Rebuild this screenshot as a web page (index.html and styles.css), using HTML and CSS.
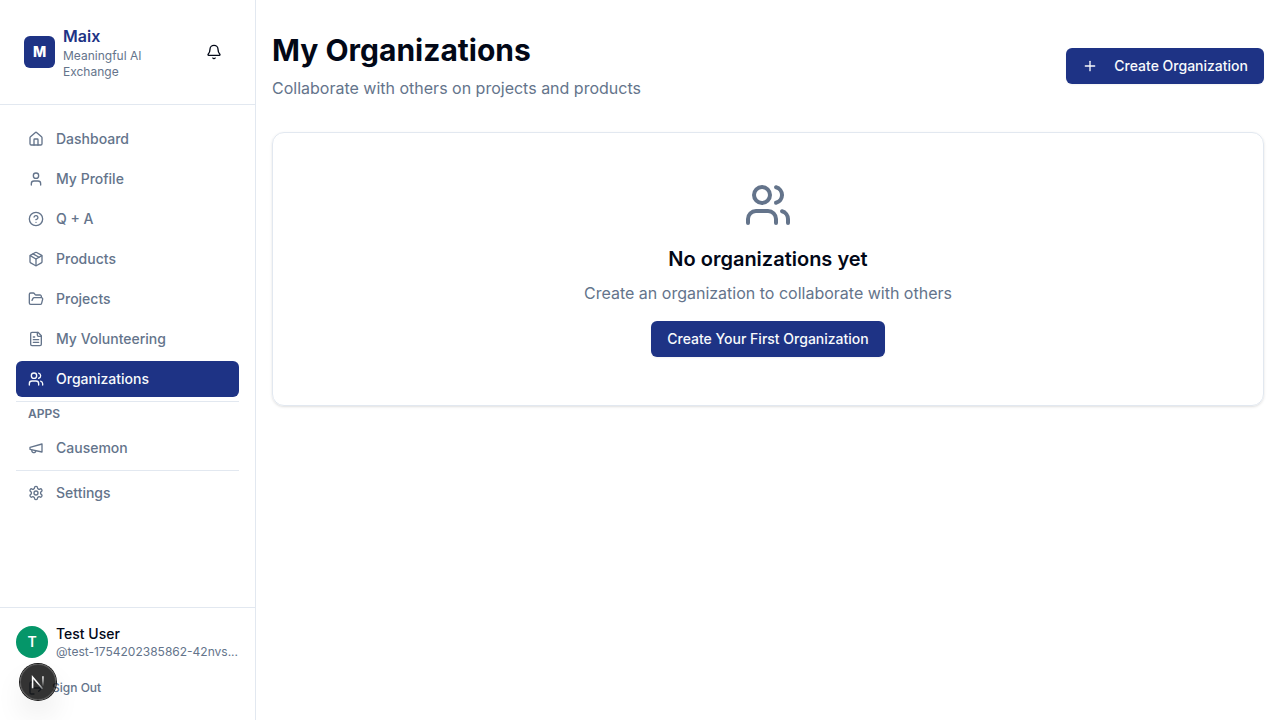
FILE: index.html
```html
<!DOCTYPE html>
<html lang="en">
<head>
<meta charset="utf-8">
<meta name="viewport" content="width=device-width, initial-scale=1">
<title>My Organizations</title>
<link rel="stylesheet" href="styles.css">
</head>
<body>
<div class="app">
  <aside class="sidebar">
    <header class="brand">
      <div class="brand-logo">M</div>
      <div class="brand-text">
        <div class="brand-name">Maix</div>
        <div class="brand-tagline">Meaningful AI Exchange</div>
      </div>
      <button class="icon-button" type="button" aria-label="Notifications">
        <svg class="icon" viewBox="0 0 24 24"><path d="M10.268 21a2 2 0 0 0 3.464 0"/><path d="M3.262 15.326A1 1 0 0 0 4 17h16a1 1 0 0 0 .74-1.673C19.41 13.956 18 12.499 18 8A6 6 0 0 0 6 8c0 4.499-1.411 5.956-2.738 7.326"/></svg>
      </button>
    </header>

    <nav class="nav" aria-label="Main">
      <a class="nav-link" href="#"><svg class="icon" viewBox="0 0 24 24"><path d="M15 21v-8a1 1 0 0 0-1-1h-4a1 1 0 0 0-1 1v8"/><path d="M3 10a2 2 0 0 1 .709-1.528l7-5.999a2 2 0 0 1 2.582 0l7 5.999A2 2 0 0 1 21 10v9a2 2 0 0 1-2 2H5a2 2 0 0 1-2-2z"/></svg>Dashboard</a>
      <a class="nav-link" href="#"><svg class="icon" viewBox="0 0 24 24"><path d="M19 21v-2a4 4 0 0 0-4-4H9a4 4 0 0 0-4 4v2"/><circle cx="12" cy="7" r="4"/></svg>My Profile</a>
      <a class="nav-link" href="#"><svg class="icon" viewBox="0 0 24 24"><circle cx="12" cy="12" r="10"/><path d="M9.09 9a3 3 0 0 1 5.83 1c0 2-3 3-3 3"/><path d="M12 17h.01"/></svg>Q + A</a>
      <a class="nav-link" href="#"><svg class="icon" viewBox="0 0 24 24"><path d="M11 21.73a2 2 0 0 0 2 0l7-4A2 2 0 0 0 21 16V8a2 2 0 0 0-1-1.73l-7-4a2 2 0 0 0-2 0l-7 4A2 2 0 0 0 3 8v8a2 2 0 0 0 1 1.73z"/><path d="M12 22V12"/><path d="M3.29 7 12 12l8.71-5"/><path d="m7.5 4.27 9 5.15"/></svg>Products</a>
      <a class="nav-link" href="#"><svg class="icon" viewBox="0 0 24 24"><path d="m6 14 1.5-2.9A2 2 0 0 1 9.24 10H20a2 2 0 0 1 1.94 2.5l-1.54 6a2 2 0 0 1-1.95 1.5H4a2 2 0 0 1-2-2V5a2 2 0 0 1 2-2h3.9a2 2 0 0 1 1.69.9l.81 1.2a2 2 0 0 0 1.67.9H18a2 2 0 0 1 2 2v2"/></svg>Projects</a>
      <a class="nav-link" href="#"><svg class="icon" viewBox="0 0 24 24"><path d="M15 2H6a2 2 0 0 0-2 2v16a2 2 0 0 0 2 2h12a2 2 0 0 0 2-2V7Z"/><path d="M14 2v4a2 2 0 0 0 2 2h4"/><path d="M10 9H8"/><path d="M16 13H8"/><path d="M16 17H8"/></svg>My Volunteering</a>
      <a class="nav-link nav-link-active" href="#" aria-current="page"><svg class="icon" viewBox="0 0 24 24"><path d="M16 21v-2a4 4 0 0 0-4-4H6a4 4 0 0 0-4 4v2"/><circle cx="9" cy="7" r="4"/><path d="M22 21v-2a4 4 0 0 0-3-3.87"/><path d="M16 3.13a4 4 0 0 1 0 7.75"/></svg>Organizations</a>
      <hr class="nav-divider">
      <h2 class="nav-heading">APPS</h2>
      <a class="nav-link" href="#"><svg class="icon" viewBox="0 0 24 24"><path d="m3 11 18-5v12L3 14v-3z"/><path d="M11.6 16.8a3 3 0 1 1-5.8-1.6"/></svg>Causemon</a>
      <hr class="nav-divider">
      <a class="nav-link" href="#"><svg class="icon" viewBox="0 0 24 24"><path d="M12.22 2h-.44a2 2 0 0 0-2 2v.18a2 2 0 0 1-1 1.73l-.43.25a2 2 0 0 1-2 0l-.15-.08a2 2 0 0 0-2.73.73l-.22.38a2 2 0 0 0 .73 2.73l.15.1a2 2 0 0 1 1 1.72v.51a2 2 0 0 1-1 1.74l-.15.09a2 2 0 0 0-.73 2.73l.22.38a2 2 0 0 0 2.73.73l.15-.08a2 2 0 0 1 2 0l.43.25a2 2 0 0 1 1 1.73V20a2 2 0 0 0 2 2h.44a2 2 0 0 0 2-2v-.18a2 2 0 0 1 1-1.73l.43-.25a2 2 0 0 1 2 0l.15.08a2 2 0 0 0 2.73-.73l.22-.39a2 2 0 0 0-.73-2.73l-.15-.08a2 2 0 0 1-1-1.74v-.5a2 2 0 0 1 1-1.74l.15-.09a2 2 0 0 0 .73-2.73l-.22-.38a2 2 0 0 0-2.73-.73l-.15.08a2 2 0 0 1-2 0l-.43-.25a2 2 0 0 1-1-1.73V4a2 2 0 0 0-2-2z"/><circle cx="12" cy="12" r="3"/></svg>Settings</a>
    </nav>

    <footer class="account">
      <div class="account-user">
        <div class="avatar">T</div>
        <div class="account-text">
          <div class="account-name">Test User</div>
          <div class="account-handle">@test-1754202385862-42nvs...</div>
        </div>
      </div>
      <button class="sign-out" type="button"><svg class="icon" viewBox="0 0 24 24"><path d="M9 21H5a2 2 0 0 1-2-2V5a2 2 0 0 1 2-2h4"/><path d="m16 17 5-5-5-5"/><path d="M21 12H9"/></svg>Sign Out</button>
    </footer>
  </aside>

  <main class="main">
    <header class="page-header">
      <div class="page-heading">
        <h1 class="page-title">My Organizations</h1>
        <p class="page-subtitle">Collaborate with others on projects and products</p>
      </div>
      <button class="button" type="button"><svg class="icon" viewBox="0 0 24 24"><path d="M5 12h14"/><path d="M12 5v14"/></svg>Create Organization</button>
    </header>

    <section class="card">
      <svg class="icon card-icon" viewBox="0 0 24 24"><path d="M16 21v-2a4 4 0 0 0-4-4H6a4 4 0 0 0-4 4v2"/><circle cx="9" cy="7" r="4"/><path d="M22 21v-2a4 4 0 0 0-3-3.87"/><path d="M16 3.13a4 4 0 0 1 0 7.75"/></svg>
      <h2 class="card-title">No organizations yet</h2>
      <p class="card-text">Create an organization to collaborate with others</p>
      <button class="button" type="button">Create Your First Organization</button>
    </section>
  </main>
</div>

<button class="dev-badge" type="button" aria-label="Open developer tools">
  <svg class="dev-badge-mark" viewBox="0 0 40 40" fill="none">
    <defs>
      <linearGradient id="stem" gradientUnits="userSpaceOnUse" x1="26" y1="13" x2="26" y2="25"><stop offset="0" stop-color="#fff"/><stop offset="0.5" stop-color="#fff" stop-opacity="0.6"/><stop offset="1" stop-color="#fff" stop-opacity="0"/></linearGradient>
      <linearGradient id="stroke" gradientUnits="userSpaceOnUse" x1="20" y1="20" x2="26" y2="29"><stop offset="0" stop-color="#fff"/><stop offset="1" stop-color="#fff" stop-opacity="0.3"/></linearGradient>
    </defs>
    <path d="M14 27V14.5L25 27.5" stroke="url(#stroke)" stroke-width="1.7"/>
    <path d="M25.5 13.5V25" stroke="url(#stem)" stroke-width="1.7"/>
  </svg>
</button>
</body>
</html>
```

FILE: styles.css
```css
:root {
  --primary: #1e3385;
  --text: #020817;
  --muted: #64748b;
  --border: #e2e8f0;
}

* {
  box-sizing: border-box;
}

body,
h1,
h2,
p {
  margin: 0;
}

body {
  background: #fff;
  color: var(--text);
  font-family: Inter, "Liberation Sans", sans-serif;
  font-size: 16px;
  line-height: 24px;
}

button {
  border: 0;
  font-family: inherit;
  cursor: pointer;
}

.icon {
  flex: none;
  width: 16px;
  height: 16px;
  fill: none;
  stroke: currentColor;
  stroke-width: 2;
  stroke-linecap: round;
  stroke-linejoin: round;
}

.app {
  display: flex;
  min-height: 100vh;
}

.sidebar {
  display: flex;
  flex-direction: column;
  flex: none;
  width: 256px;
  border-right: 1px solid var(--border);
}

.brand {
  display: flex;
  align-items: center;
  gap: 8px;
  padding: 24px;
  border-bottom: 1px solid var(--border);
}

.brand-logo {
  display: flex;
  align-items: center;
  justify-content: center;
  flex: none;
  width: 31px;
  height: 32px;
  border-radius: 6px;
  background: var(--primary);
  color: #fff;
  font-size: 14px;
  font-weight: 800;
}

.brand-text {
  flex: 1;
  padding-right: 24px;
}

.brand-name {
  color: var(--primary);
  font-weight: 600;
}

.brand-tagline {
  color: var(--muted);
  font-size: 12px;
  line-height: 16px;
}

.icon-button {
  display: flex;
  align-items: center;
  justify-content: center;
  flex: none;
  width: 34px;
  height: 36px;
  padding: 0;
  background: none;
  color: var(--text);
}

.nav {
  display: flex;
  flex-direction: column;
  flex: 1;
  gap: 4px;
  padding: 16px;
}

.nav-link {
  display: flex;
  align-items: center;
  gap: 12px;
  padding: 8px 12px;
  border-radius: 6px;
  color: var(--muted);
  font-size: 14px;
  font-weight: 500;
  line-height: 20px;
  text-decoration: none;
}

.nav-link-active {
  background: var(--primary);
  color: #f8fafc;
}

.nav-divider {
  width: 100%;
  height: 1px;
  margin: 0;
  border: 0;
  background: var(--border);
}

.nav-heading {
  padding: 0 12px 4px;
  color: var(--muted);
  font-size: 12px;
  font-weight: 600;
  line-height: 16px;
}

.account {
  display: flex;
  flex-direction: column;
  gap: 12px;
  padding: 16px;
  border-top: 1px solid var(--border);
}

.account-user {
  display: flex;
  align-items: center;
  gap: 8px;
}

.avatar {
  display: flex;
  align-items: center;
  justify-content: center;
  flex: none;
  width: 32px;
  height: 32px;
  border-radius: 50%;
  background: #059669;
  color: #fff;
  font-size: 14px;
  font-weight: 600;
}

.account-text {
  flex: 1;
  min-width: 0;
}

.account-name {
  font-size: 14px;
  font-weight: 500;
  line-height: 20px;
}

.account-handle {
  color: var(--muted);
  font-size: 12px;
  line-height: 16px;
  white-space: nowrap;
}

.sign-out {
  display: flex;
  align-items: center;
  gap: 8px;
  height: 32px;
  padding: 0 12px;
  background: none;
  color: var(--muted);
  font-size: 12px;
  font-weight: 500;
  line-height: 16px;
}

.main {
  flex: 1;
  min-width: 0;
  padding: 32px 16px;
}

.page-header {
  display: flex;
  align-items: center;
  justify-content: space-between;
  gap: 16px;
  margin-bottom: 32px;
}

.page-heading {
  display: flex;
  flex-direction: column;
  gap: 8px;
}

.page-title {
  font-size: 30px;
  font-weight: 700;
  line-height: 36px;
}

.page-subtitle,
.card-text {
  color: var(--muted);
}

.button {
  display: flex;
  align-items: center;
  gap: 16px;
  height: 36px;
  padding: 0 16px;
  border-radius: 6px;
  background: var(--primary);
  box-shadow: 0 1px 2px rgba(0, 0, 0, 0.05);
  color: #f8fafc;
  font-size: 14px;
  font-weight: 500;
  line-height: 20px;
  white-space: nowrap;
}

.card {
  display: flex;
  flex-direction: column;
  align-items: center;
  padding: 48px;
  border: 1px solid var(--border);
  border-radius: 12px;
  box-shadow: 0 1px 3px rgba(0, 0, 0, 0.1), 0 1px 2px -1px rgba(0, 0, 0, 0.1);
  text-align: center;
}

.card-icon {
  width: 48px;
  height: 48px;
  margin-bottom: 16px;
  color: var(--muted);
}

.card-title {
  margin-bottom: 8px;
  font-size: 20px;
  font-weight: 600;
  line-height: 28px;
}

.card-text {
  margin-bottom: 16px;
}

/* Floating badge pinned over the bottom-left corner */
.dev-badge {
  position: fixed;
  bottom: 20px;
  left: 20px;
  display: flex;
  align-items: center;
  justify-content: center;
  width: 36px;
  height: 36px;
  padding: 0;
  border-radius: 50%;
  background: rgba(0, 0, 0, 0.8);
  box-shadow: 0 0 0 1px #171717, inset 0 0 0 1px rgba(255, 255, 255, 0.14), 0 16px 32px -8px rgba(0, 0, 0, 0.24);
}

.dev-badge-mark {
  width: 36px;
  height: 36px;
}
```
